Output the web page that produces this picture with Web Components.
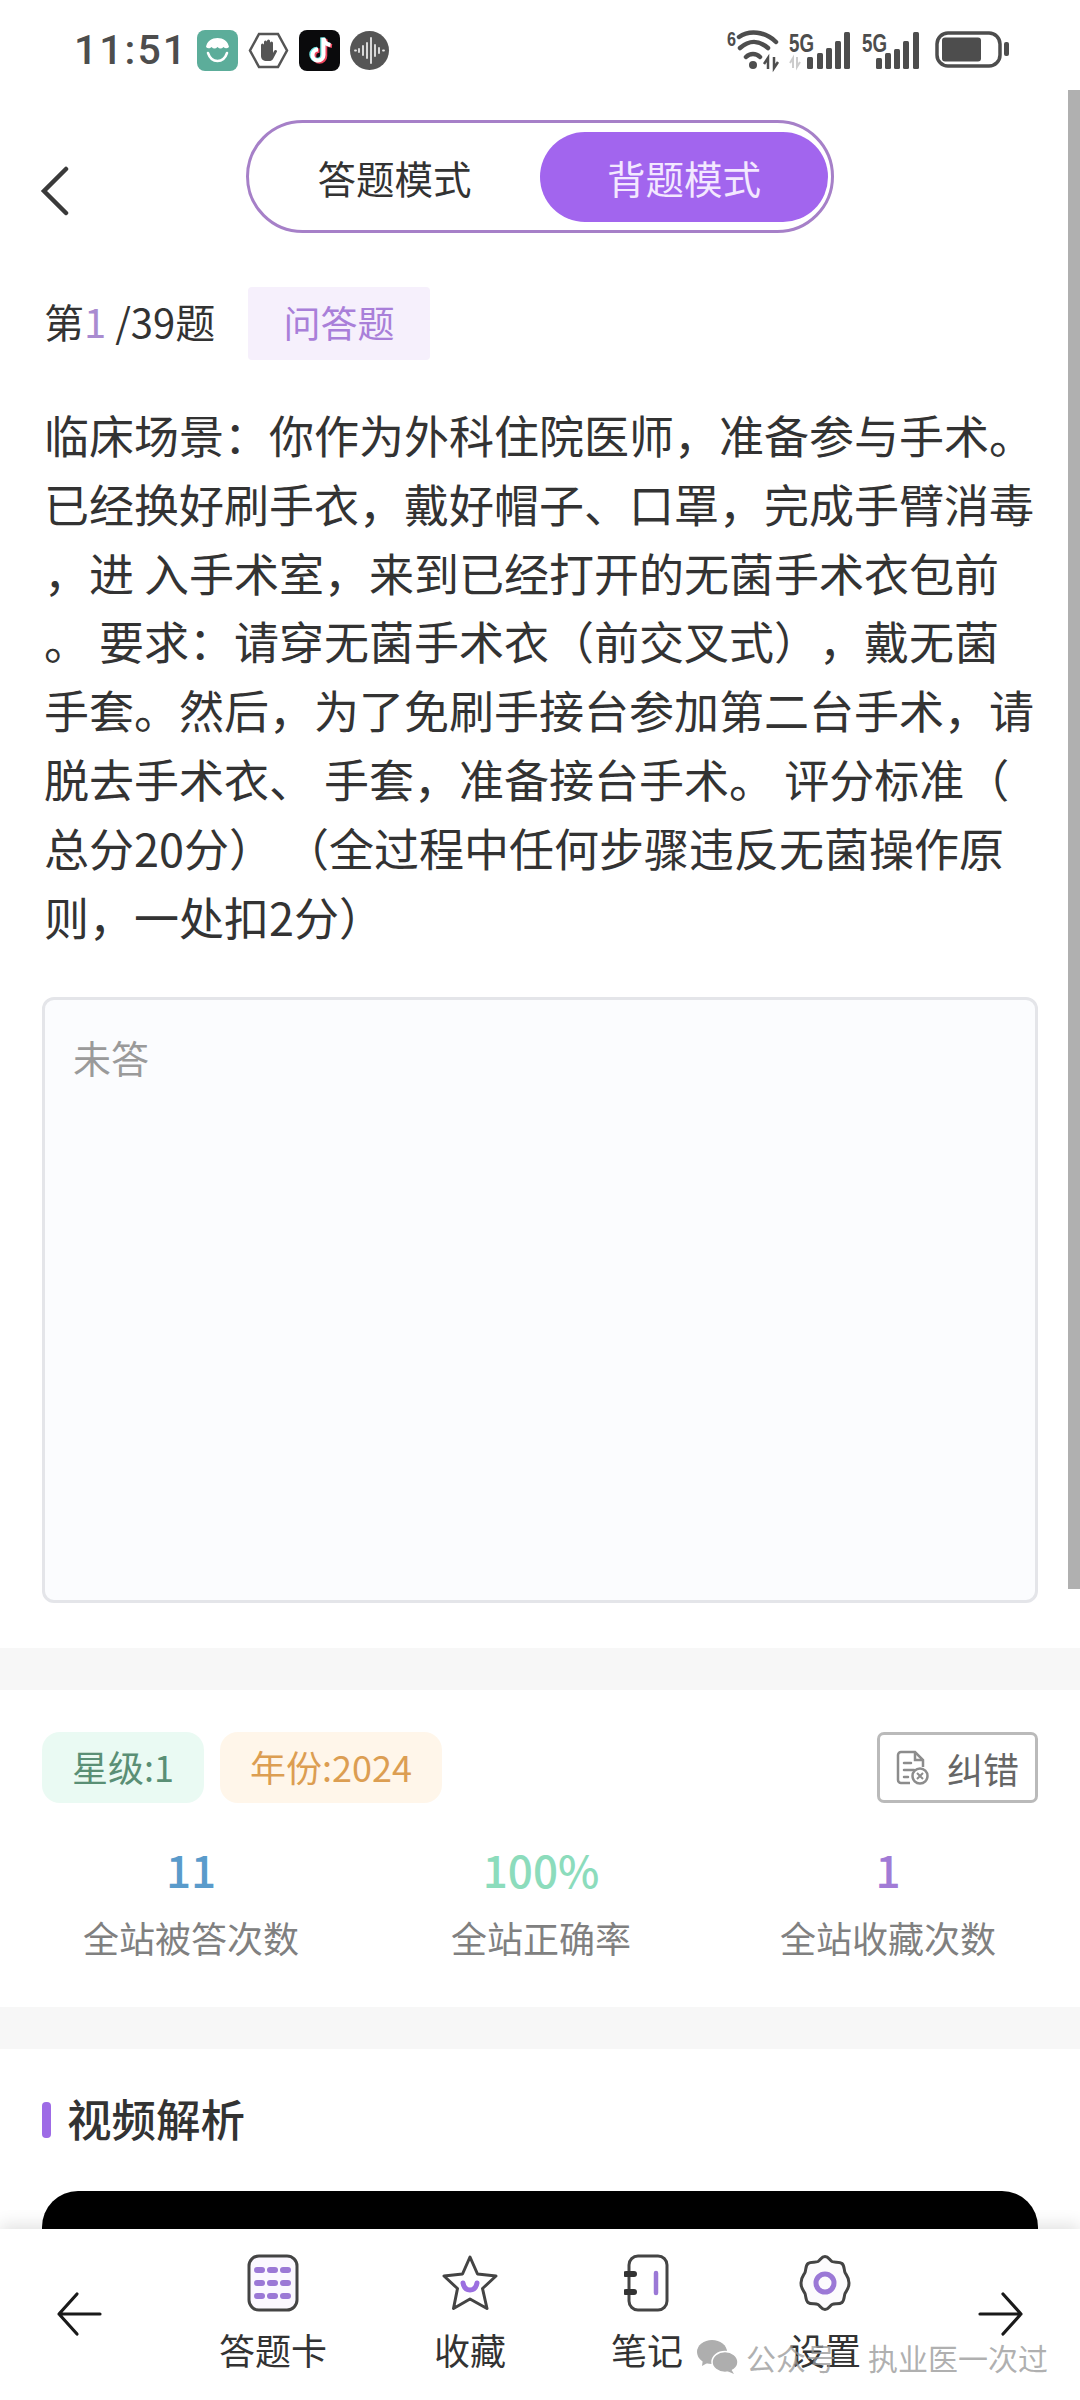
<!DOCTYPE html>
<html lang="zh">
<head>
<meta charset="utf-8">
<title>背题模式</title>
<style>
  html, body { margin: 0; background: #fff; }
  body {
    width: 1080px;
    height: 2400px;
    overflow: hidden;
    font-family: "Noto Sans CJK SC", "Noto Sans", sans-serif;
    color: #333;
  }
</style>
</head>
<body>
<app-page>
  <app-status-bar slot="top"></app-status-bar>
  <app-mode-header></app-mode-header>
  <app-question-head current="1" total="39" kind="问答题"></app-question-head>
  <app-question-text>
    <span>临床场景&#xFF1A;你作为外科住院医师&#xFF0C;准备参与手术。</span>
    <span>已经换好刷手衣&#xFF0C;戴好帽子、口罩&#xFF0C;完成手臂消毒</span>
    <span>&#xFF0C;进 入手术室&#xFF0C;来到已经打开的无菌手术衣包前</span>
    <span>。 要求&#xFF1A;请穿无菌手术衣&#xFF08;前交叉式&#xFF09;&#xFF0C;戴无菌</span>
    <span>手套。然后&#xFF0C;为了免刷手接台参加第二台手术&#xFF0C;请</span>
    <span>脱去手术衣、 手套&#xFF0C;准备接台手术。 评分标准&#xFF08;</span>
    <span>总分20分&#xFF09; &#xFF08;全过程中任何步骤违反无菌操作原</span>
    <span>则&#xFF0C;一处扣2分&#xFF09;</span>
  </app-question-text>
  <app-answer-box>未答</app-answer-box>
  <app-stats></app-stats>
  <app-video-section></app-video-section>
  <app-bottom-nav slot="bottom"></app-bottom-nav>
</app-page>

<script>
"use strict";

class AppPage extends HTMLElement {
    constructor() {
        super();
        this.attachShadow({ mode: "open" });
        this.shadowRoot.innerHTML = `
            <style>
                :host {
                    display: flex;
                    flex-direction: column;
                    position: relative;
                    width: 1080px;
                    height: 2400px;
                    overflow: hidden;
                }
                #scroll {
                    flex: 1;
                    min-height: 0;
                    overflow: hidden;
                }
                #bar {
                    position: absolute;
                    right: 0;
                    top: 90px;
                    width: 12px;
                    height: 1499px;
                    background: #b0b0b0;
                }
            </style>
            <slot name="top"></slot>
            <div id="scroll"><slot></slot></div>
            <slot name="bottom"></slot>
            <div id="bar"></div>
        `;
    }
}

class AppStatusBar extends HTMLElement {
    constructor() {
        super();
        this.attachShadow({ mode: "open" });
        this.shadowRoot.innerHTML = `
            <style>
                :host {
                    display: flex;
                    align-items: center;
                    height: 90px;
                    padding: 10px 69px 0 74px;
                    box-sizing: border-box;
                    color: #4d4d4d;
                }
                #time {
                    font: 500 41px/1 Roboto, sans-serif;
                    letter-spacing: 2px;
                    width: 123px;
                }
                #apps { display: flex; align-items: center; gap: 10px; }
                #sys { margin-left: auto; display: flex; align-items: center; }
                svg { display: block; overflow: visible; }
                .sm { font: 700 25px/1 "Liberation Sans", sans-serif; fill: #4d4d4d; }
            </style>
            <div id="time">11:51</div>
            <div id="apps">
                <svg width="41" height="41" viewBox="0 0 41 41">
                    <rect width="41" height="41" rx="8" fill="#5cad9a"/>
                    <path d="M9 17c1-6 6-9 11.500-9s10.500 3 11.500 9c-2 2-4 1.500-5.500 0-2 2-4 2-6 0-2 2-4 2-6 0C13 18.500 11 19 9 17z" fill="#fff"/>
                    <path d="M11 23c2 6 5 8 9.500 8s7.500-2 9.500-8" fill="none" stroke="#fff" stroke-width="2.500" stroke-linecap="round"/>
                </svg>
                <svg width="41" height="37" viewBox="0 0 41 37">
                    <path d="M11 2h19l9 16.500-9 16.500H11L2 18.500z" fill="#fff" stroke="#555" stroke-width="2.500"/>
                    <path d="M13 20v-7a1.500 1.500 0 0 1 3 0v4-7a1.500 1.500 0 0 1 3 0v7-8a1.500 1.500 0 0 1 3 0v8-6a1.500 1.500 0 0 1 3 0v10l1-2c1-2 3.500-1 3 .5L25 27c-1 1.500-2 2-4 2h-2c-4 0-6-2-6-5z" fill="#555"/>
                </svg>
                <svg width="41" height="41" viewBox="0 0 41 41">
                    <rect width="41" height="41" rx="8" fill="#0a0a0c"/>
                    <path d="M24.500 8v17a5.500 5.500 0 1 1-5.500-5.500" fill="none" stroke="#f0465e" stroke-width="4.500" transform="translate(1.500 1)"/>
                    <path d="M24.500 8c.5 4 3 6.500 7 7" fill="none" stroke="#f0465e" stroke-width="4" transform="translate(1.500 1)"/>
                    <path d="M24.500 8v17a5.500 5.500 0 1 1-5.500-5.500" fill="none" stroke="#6fe6e6" stroke-width="4.500" transform="translate(-1 -.5)"/>
                    <path d="M24.500 8c.5 4 3 6.500 7 7" fill="none" stroke="#6fe6e6" stroke-width="4" transform="translate(-1 -.5)"/>
                    <path d="M24.500 8v17a5.500 5.500 0 1 1-5.500-5.500M24.500 8c.5 4 3 6.500 7 7" fill="none" stroke="#fff" stroke-width="4"/>
                </svg>
                <svg width="39" height="39" viewBox="0 0 39 39">
                    <circle cx="19.500" cy="19.500" r="19.500" fill="#555"/>
                    <path d="M5 19.500h1M9 18v3M13 15v9M17 12v15M21 7v25M25 14v11M29 17v5M33 19.500h1" stroke="#e8e8e8" stroke-width="1.800" stroke-linecap="round"/>
                </svg>
            </div>
            <div id="sys">
                <svg width="62" height="40" viewBox="0 0 62 40">
                    <text class="sm" x="0" y="16" textLength="9" lengthAdjust="spacingAndGlyphs" style="font-size:21px">6</text>
                    <path d="M12 7C22 0 38 1 49 12M13 18C22 10 32 10 41 18M19 27C23 23 29 23 33 27" fill="none" stroke="#4d4d4d" stroke-width="4.500" stroke-linecap="round"/>
                    <circle cx="26" cy="35" r="4" fill="#4d4d4d"/>
                    <path d="M41 39V28l-4 6M47 27v11l4-6" fill="none" stroke="#4d4d4d" stroke-width="2.500"/>
                </svg>
                <svg width="62" height="40" viewBox="0 0 62 40">
                    <text class="sm" x="0" y="22" textLength="25" lengthAdjust="spacingAndGlyphs">5G</text>
                    <path d="M4 38V28l-3 5M8 27v10l3-5" fill="none" stroke="#ccc" stroke-width="2"/>
                    <rect x="18" y="27" width="6" height="12" rx="1.500" fill="#4d4d4d"/>
                    <rect x="28" y="23" width="6" height="16" rx="1.500" fill="#4d4d4d"/>
                    <rect x="37" y="18" width="6" height="21" rx="1.500" fill="#4d4d4d"/>
                    <rect x="46" y="11" width="6" height="28" rx="1.500" fill="#4d4d4d"/>
                    <rect x="55" y="2" width="6" height="37" rx="1.500" fill="#4d4d4d"/>
                </svg>
                <svg width="57" height="40" viewBox="0 0 57 40" style="margin-left:11px">
                    <text class="sm" x="0" y="22" textLength="25" lengthAdjust="spacingAndGlyphs">5G</text>
                    <rect x="14" y="28" width="6" height="11" rx="1.500" fill="#4d4d4d"/>
                    <rect x="23" y="23" width="6" height="16" rx="1.500" fill="#4d4d4d"/>
                    <rect x="32" y="19" width="6" height="20" rx="1.500" fill="#4d4d4d"/>
                    <rect x="41" y="11" width="6" height="28" rx="1.500" fill="#4d4d4d"/>
                    <rect x="51" y="2" width="6" height="37" rx="1.500" fill="#4d4d4d"/>
                </svg>
                <svg width="76" height="38" viewBox="0 0 76 38" style="margin-left:16px">
                    <rect x="2" y="2" width="63" height="33" rx="11" fill="none" stroke="#4d4d4d" stroke-width="3.500"/>
                    <rect x="7" y="6.500" width="39" height="24" rx="3" fill="#4d4d4d"/>
                    <rect x="69" y="11" width="5" height="14" rx="2" fill="#4d4d4d"/>
                </svg>
            </div>
        `;
    }
}

class AppModeHeader extends HTMLElement {
    constructor() {
        super();
        this.attachShadow({ mode: "open" });
        this.shadowRoot.innerHTML = `
            <style>
                :host {
                    display: flex;
                    align-items: center;
                    height: 197px;
                    padding: 30px 0 54px 40px;
                    box-sizing: border-box;
                }
                svg { display: block; margin-top: 28px; }
                #toggle {
                    margin-left: 176px;
                    width: 588px;
                    height: 113px;
                    box-sizing: border-box;
                    border: 3px solid #a680c8;
                    border-radius: 57px;
                    display: flex;
                    align-items: center;
                    padding: 0 3px 0 0;
                    font-size: 38.500px;
                }
                #toggle div {
                    flex: 1;
                    text-align: center;
                    color: #333;
                }
                #toggle .on {
                    flex: 0 0 288px;
                    height: 90px;
                    line-height: 90px;
                    border-radius: 45px;
                    background: #a265ee;
                    color: #f3e8ff;
                }
            </style>
            <svg width="30" height="50" viewBox="0 0 30 50">
                <path d="M26 3 4 25l22 22" fill="none" stroke="#3a3a3a" stroke-width="4.500" stroke-linecap="round"/>
            </svg>
            <div id="toggle">
                <div>答题模式</div>
                <div class="on">背题模式</div>
            </div>
        `;
    }
}

class AppQuestionHead extends HTMLElement {
    constructor() {
        super();
        this.attachShadow({ mode: "open" });
        this.shadowRoot.innerHTML = `
            <style>
                :host {
                    display: flex;
                    align-items: center;
                    padding: 0 44px;
                    height: 73px;
                    font-size: 40px;
                    color: #333;
                }
                b { font-weight: 400; color: #a98bd0; }
                #label { width: 204px; white-space: nowrap; margin-bottom: 5px; }
                #tag {
                    width: 182px;
                    height: 73px;
                    line-height: 71px;
                    text-align: center;
                    background: #f6f0fc;
                    border-radius: 4px;
                    color: #a97fd9;
                    font-size: 37px;
                }
            </style>
            <div id="label">第<b id="cur"></b> /<span id="tot"></span>题</div>
            <div id="tag"></div>
        `;
    }

    connectedCallback() {
        this.shadowRoot.getElementById("cur").textContent = this.getAttribute("current");
        this.shadowRoot.getElementById("tot").textContent = this.getAttribute("total");
        this.shadowRoot.getElementById("tag").textContent = this.getAttribute("kind");
    }
}

class AppQuestionText extends HTMLElement {
    constructor() {
        super();
        this.attachShadow({ mode: "open" });
        this.shadowRoot.innerHTML = `
            <style>
                :host {
                    display: block;
                    padding: 41px 0 0 44px;
                    font-size: 45px;
                    line-height: 68.800px;
                    color: #333;
                    text-spacing-trim: space-all;
                }
                ::slotted(span) { display: block; white-space: pre; }
            </style>
            <slot></slot>
        `;
    }
}

class AppAnswerBox extends HTMLElement {
    constructor() {
        super();
        this.attachShadow({ mode: "open" });
        this.shadowRoot.innerHTML = `
            <style>
                :host {
                    display: block;
                    margin: 46px 42px 45px;
                    height: 606px;
                    box-sizing: border-box;
                    padding: 31px 28px;
                    border: 3px solid #e4e5e9;
                    border-radius: 12px;
                    background: #fbfcfe;
                    font-size: 38px;
                    line-height: 52px;
                    color: #9a9a9a;
                }
            </style>
            <slot></slot>
        `;
    }
}

class AppStats extends HTMLElement {
    constructor() {
        super();
        this.attachShadow({ mode: "open" });
        this.shadowRoot.innerHTML = `
            <style>
                :host {
                    display: block;
                    border-top: 42px solid #f7f7f7;
                    border-bottom: 42px solid #f7f7f7;
                    height: 275px;
                    padding: 42px 42px 0;
                }
                #tags { display: flex; align-items: center; gap: 16px; height: 71px; }
                .tag {
                    height: 71px;
                    line-height: 69px;
                    border-radius: 18px;
                    font-size: 36px;
                    text-align: center;
                }
                #star { width: 162px; background: #eafaf3; color: #5a8f75; }
                #year { width: 222px; background: #fff6ea; color: #dc9e52; }
                #fix {
                    margin-left: auto;
                    width: 161px;
                    height: 71px;
                    box-sizing: border-box;
                    border: 3px solid #bababa;
                    border-radius: 7px;
                    display: flex;
                    align-items: center;
                    justify-content: center;
                    gap: 18px;
                    font-size: 36px;
                    color: #666;
                }
                #nums {
                    display: grid;
                    grid-template-columns: 298px 402px 292px;
                    margin-top: 35px;
                    text-align: center;
                }
                .n { font-size: 44px; line-height: 62px; font-weight: 500; }
                .l { font-size: 36px; line-height: 56px; margin-top: 9px; color: #808080; }
                svg { display: block; }
            </style>
            <div id="tags">
                <div class="tag" id="star">星级:1</div>
                <div class="tag" id="year">年份:2024</div>
                <div id="fix">
                    <svg width="33" height="36" viewBox="0 0 33 36" fill="none" stroke="#8c8c8c" stroke-width="2.500">
                        <path d="M14 33H5a3 3 0 0 1-3-3V5a3 3 0 0 1 3-3h14l8 8v7"/>
                        <path d="M19 2v8h8" />
                        <path d="M8 13h7M8 20h10M8 27h4" stroke-linecap="round"/>
                        <circle cx="24" cy="26" r="7.500" fill="#fff"/>
                        <path d="m21 23 6 6m0-6-6 6" stroke-width="2"/>
                    </svg>
                    <span>纠错</span>
                </div>
            </div>
            <div id="nums">
                <div><div class="n" style="color:#5a9bcb">11</div><div class="l">全站被答次数</div></div>
                <div><div class="n" style="color:#8cdcbc">100%</div><div class="l">全站正确率</div></div>
                <div><div class="n" style="color:#a17bd6">1</div><div class="l">全站收藏次数</div></div>
            </div>
        `;
    }
}

class AppVideoSection extends HTMLElement {
    constructor() {
        super();
        this.attachShadow({ mode: "open" });
        this.shadowRoot.innerHTML = `
            <style>
                :host { display: block; padding: 42px 42px 0; }
                h2 {
                    display: flex;
                    align-items: center;
                    gap: 16px;
                    margin: 0;
                    height: 58px;
                    font-size: 44.500px;
                    font-weight: 500;
                    color: #333;
                }
                h2::before {
                    content: "";
                    width: 9px;
                    height: 36px;
                    border-radius: 4px;
                    background: #9e6be6;
                }
                h2 span { margin-bottom: 6px; }
                #video {
                    margin-top: 42px;
                    height: 500px;
                    background: #000;
                    border-radius: 36px;
                }
            </style>
            <h2><span>视频解析</span></h2>
            <div id="video"></div>
        `;
    }
}

class AppBottomNav extends HTMLElement {
    constructor() {
        super();
        this.attachShadow({ mode: "open" });
        this.shadowRoot.innerHTML = `
            <style>
                :host {
                    display: grid;
                    grid-template-columns: 184px 178px 216px 138px 218px 1fr;
                    position: relative;
                    height: 171px;
                    background: #fff;
                    box-shadow: 0 -4px 16px rgba(0,0,0,.12);
                    color: #333;
                    font-size: 36px;
                }
                .item {
                    display: flex;
                    flex-direction: column;
                    align-items: center;
                    justify-content: flex-start;
                    padding-top: 25px;
                }
                .item svg { display: block; height: 58px; }
                .item span { line-height: 50px; margin-top: 12px; }
                .arrow { display: flex; align-items: flex-start; padding-top: 62px; }
                #back { padding-left: 56px; }
                #next { justify-content: flex-end; padding-right: 56px; }
                #mark {
                    position: absolute;
                    left: 697px;
                    top: 110px;
                    display: flex;
                    align-items: center;
                    font-size: 30px;
                    line-height: 36px;
                    color: rgba(150,150,150,.75);
                }
                #mark svg { margin-right: 8px; }
                #mark b { font-weight: 400; width: 122px; }
            </style>
            <div class="arrow" id="back">
                <svg width="46" height="46" viewBox="0 0 46 46" fill="none" stroke="#1a1a1a" stroke-width="3.200" stroke-linecap="round" stroke-linejoin="round">
                    <path d="M44 23H3M21 3 3 23l18 20"/>
                </svg>
            </div>
            <div class="item">
                <svg width="52" height="58" viewBox="0 0 52 58">
                    <rect x="2" y="2" width="48" height="54" rx="10" fill="#fbf8ff" stroke="#444" stroke-width="3"/>
                    <path d="M10 16h5M23 16h5M36 16h5M10 29h5M23 29h5M36 29h5M10 42h5M23 42h5M36 42h5" stroke="#9b78d6" stroke-width="6" stroke-linecap="round"/>
                </svg>
                <span>答题卡</span>
            </div>
            <div class="item">
                <svg width="56" height="58" viewBox="0 0 56 58">
                    <path d="M28 3l7.500 17 18.500 2-13.500 12.500 4.500 20L28 45 11.500 54.500l4-20L2 22l18.500-2z" fill="#fff" stroke="#444" stroke-width="3" stroke-linejoin="round"/>
                    <path d="M21 29c1 5 4 7 7 7s6-2 7-7" fill="none" stroke="#9b6fe0" stroke-width="5" stroke-linecap="round"/>
                </svg>
                <span>收藏</span>
            </div>
            <div class="item">
                <svg width="46" height="58" viewBox="0 0 46 58">
                    <rect x="5" y="2" width="38" height="54" rx="9" fill="#fff" stroke="#444" stroke-width="3"/>
                    <path d="M2 20h8M2 38h8" stroke="#333" stroke-width="6" stroke-linecap="round"/>
                    <path d="M32 19v20" stroke="#9b78d6" stroke-width="4.500" stroke-linecap="round"/>
                </svg>
                <span>笔记</span>
            </div>
            <div class="item">
                <svg width="52" height="58" viewBox="0 0 52 58">
                    <path d="M26 2.500c3.500 0 4.500 3.500 7 5 3 1.500 7-.5 10 2 2.500 2 2 6.500 3 9 1 2.500 4 4.500 4 10.500s-3 8-4 10.500c-1 2.500-.5 7-3 9-3 2.500-7 .5-10 2-2.500 1.500-3.500 5-7 5s-4.500-3.500-7-5c-3-1.500-7 .5-10-2-2.500-2-2-6.500-3-9C5 37 2 35 2 29s3-8 4-10.500c1-2.500.5-7 3-9 3-2.500 7-.5 10-2 2.500-1.500 3.500-5 7-5z" fill="#fcfbfd" stroke="#444" stroke-width="3"/>
                    <circle cx="26" cy="29" r="9" fill="none" stroke="#9b78d6" stroke-width="5"/>
                </svg>
                <span>设置</span>
            </div>
            <div class="arrow" id="next">
                <svg width="46" height="46" viewBox="0 0 46 46" fill="none" stroke="#1a1a1a" stroke-width="3.200" stroke-linecap="round" stroke-linejoin="round">
                    <path d="M2 23h41M25 3l18 20-18 20"/>
                </svg>
            </div>
            <div id="mark">
                <svg width="41" height="34" viewBox="0 0 41 34" fill="#aeaeae">
                    <ellipse cx="15" cy="12" rx="15" ry="12"/>
                    <path d="M6 19l-1 7 7-4z"/>
                    <ellipse cx="28" cy="22" rx="13" ry="10.500" stroke="#fff" stroke-width="1.500"/>
                    <path d="M34 29l3 5-7-3z"/>
                </svg>
                <b>公众号</b>
                <span>执业医一次过</span>
            </div>
        `;
    }
}

customElements.define("app-page", AppPage);
customElements.define("app-status-bar", AppStatusBar);
customElements.define("app-mode-header", AppModeHeader);
customElements.define("app-question-head", AppQuestionHead);
customElements.define("app-question-text", AppQuestionText);
customElements.define("app-answer-box", AppAnswerBox);
customElements.define("app-stats", AppStats);
customElements.define("app-video-section", AppVideoSection);
customElements.define("app-bottom-nav", AppBottomNav);
</script>
</body>
</html>
